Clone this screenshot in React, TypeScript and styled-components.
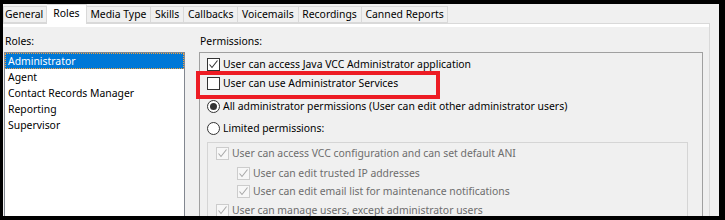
import * as React from "react";
import styled, { createGlobalStyle, css } from "styled-components";

const Global = createGlobalStyle`
  html, body {
    margin: 0;
    padding: 0;
    background: #000;
  }
  body {
    width: 725px;
    height: 220px;
    overflow: hidden;
    font-family: "Noto Sans", "Open Sans", sans-serif;
    font-size: 10.4px;
    color: #000;
  }
`;

const Frame = styled.div`
  box-sizing: border-box;
  width: 725px;
  height: 220px;
  padding: 4px 6px 4px 3px;
  background: #000;
`;

const Window = styled.div`
  height: 212px;
  background: #f0f0f0;
  overflow: hidden;
  padding-right: 9px;
`;

const TabStrip = styled.div`
  display: flex;
  align-items: flex-end;
  height: 19px;
  position: relative;
  z-index: 1;
`;

const Tab = styled.div<{ $active?: boolean }>`
  box-sizing: border-box;
  height: 17px;
  line-height: 15px;
  padding: 0 3.8px;
  border: 1px solid #d9d9d9;
  border-left-width: 0;
  background: #f0f0f0;
  white-space: nowrap;
  &:first-child {
    border-left-width: 1px;
    padding: 0 3px 0 1px;
  }
  ${(p) =>
    p.$active &&
    css`
      height: 20px;
      margin-bottom: -1px;
      background: #fff;
      border-bottom: none;
      line-height: 17px;
      padding: 0 6px;
    `}
`;

const Page = styled.div`
  box-sizing: border-box;
  height: 194px;
  border: 1px solid #d9d9d9;
  border-left: none;
  border-bottom: none;
  box-shadow: inset 0 3px 0 #fff;
  padding: 9px 6px 0 1px;
  display: grid;
  grid-template-columns: 181px 504px;
  column-gap: 14px;
`;

const Column = styled.div`
  display: flex;
  flex-direction: column;
`;

const Label = styled.div`
  height: 16px;
  line-height: 16px;
  margin-bottom: 3px;
  padding-left: 1px;
`;

const ListBox = styled.div`
  box-sizing: border-box;
  height: 200px;
  background: #fff;
  border: 1px solid #828790;
`;

const ListItem = styled.div<{ $selected?: boolean }>`
  box-sizing: border-box;
  height: 16px;
  line-height: 14px;
  padding-left: 2px;
  border: 1px solid transparent;
  ${(p) =>
    p.$selected &&
    css`
      background: #0078d7;
      color: #fff;
      border: 1px dotted #f6a13a;
    `}
`;

const GroupBox = styled.div`
  position: relative;
  box-sizing: border-box;
  height: 200px;
  border: 1px solid #a0a0a0;
  padding: 0 14px 0 7px;
`;

const Row = styled.div<{ $top: number; $indent?: number; $disabled?: boolean }>`
  display: flex;
  align-items: center;
  gap: 3px;
  height: 16px;
  margin-top: ${(p) => p.$top}px;
  padding-left: ${(p) => p.$indent ?? 0}px;
  color: ${(p) => (p.$disabled ? "#6d6d6d" : "#000")};
  white-space: nowrap;
`;

const Box = styled.span<{ $disabled?: boolean }>`
  box-sizing: border-box;
  flex: none;
  width: 13px;
  height: 13px;
  border: 1px solid ${(p) => (p.$disabled ? "#cccccc" : "#333")};
  background: ${(p) => (p.$disabled ? "#f7f7f7" : "#fff")};
  display: flex;
  align-items: center;
  justify-content: center;
`;

const Radio = styled.span<{ $checked?: boolean }>`
  box-sizing: border-box;
  flex: none;
  width: 13px;
  height: 13px;
  border: 1px solid #333;
  border-radius: 50%;
  background: #fff;
  display: flex;
  align-items: center;
  justify-content: center;
  &::after {
    content: "";
    width: 7px;
    height: 7px;
    border-radius: 50%;
    background: ${(p) => (p.$checked ? "#333" : "transparent")};
  }
`;

const Inner = styled.div`
  box-sizing: border-box;
  height: 90px;
  margin-top: 6px;
  border: 1px solid #d5d5d5;
  padding-left: 8px;
`;

const Highlight = styled.div`
  position: absolute;
  left: -4px;
  top: 18px;
  width: 244px;
  height: 28px;
  box-sizing: border-box;
  border: 4px solid #ed1c24;
  pointer-events: none;
`;

const Check = ({ color }: { color: string }) => (
  <svg width="11" height="11" viewBox="0 0 11 11">
    <path d="M1.5 5.5 L4 8.5 L9.5 1.5" fill="none" stroke={color} strokeWidth="1.1" />
  </svg>
);

const CheckBox = ({ checked, disabled }: { checked?: boolean; disabled?: boolean }) => (
  <Box $disabled={disabled}>{checked && <Check color={disabled ? "#a8a8a8" : "#333"} />}</Box>
);

const tabs = ["General", "Roles", "Media Type", "Skills", "Callbacks", "Voicemails", "Recordings", "Canned Reports"];
const roles = ["Administrator", "Agent", "Contact Records Manager", "Reporting", "Supervisor"];

export default function App() {
  return (
    <Frame>
      <Global />
      <Window>
        <TabStrip>
          {tabs.map((t) => (
            <Tab key={t} $active={t === "Roles"}>
              {t}
            </Tab>
          ))}
        </TabStrip>
        <Page>
          <Column>
            <Label>Roles:</Label>
            <ListBox>
              {roles.map((r, i) => (
                <ListItem key={r} $selected={i === 0}>
                  {r}
                </ListItem>
              ))}
            </ListBox>
          </Column>
          <Column>
            <Label>Permissions:</Label>
            <GroupBox>
              <Row $top={3}>
                <CheckBox checked />
                User can access Java VCC Administrator application
              </Row>
              <Row $top={3}>
                <CheckBox />
                User can use Administrator Services
              </Row>
              <Row $top={7}>
                <Radio $checked />
                All administrator permissions (User can edit other administrator users)
              </Row>
              <Row $top={6}>
                <Radio />
                Limited permissions:
              </Row>
              <Inner>
                <Row $top={2} $disabled>
                  <CheckBox checked disabled />
                  User can access VCC configuration and can set default ANI
                </Row>
                <Row $top={4} $indent={21} $disabled>
                  <CheckBox checked disabled />
                  User can edit trusted IP addresses
                </Row>
                <Row $top={2} $indent={21} $disabled>
                  <CheckBox checked disabled />
                  User can edit email list for maintenance notifications
                </Row>
                <Row $top={3} $disabled>
                  <CheckBox checked disabled />
                  User can manage users, except administrator users
                </Row>
              </Inner>
              <Highlight />
            </GroupBox>
          </Column>
        </Page>
      </Window>
    </Frame>
  );
}
